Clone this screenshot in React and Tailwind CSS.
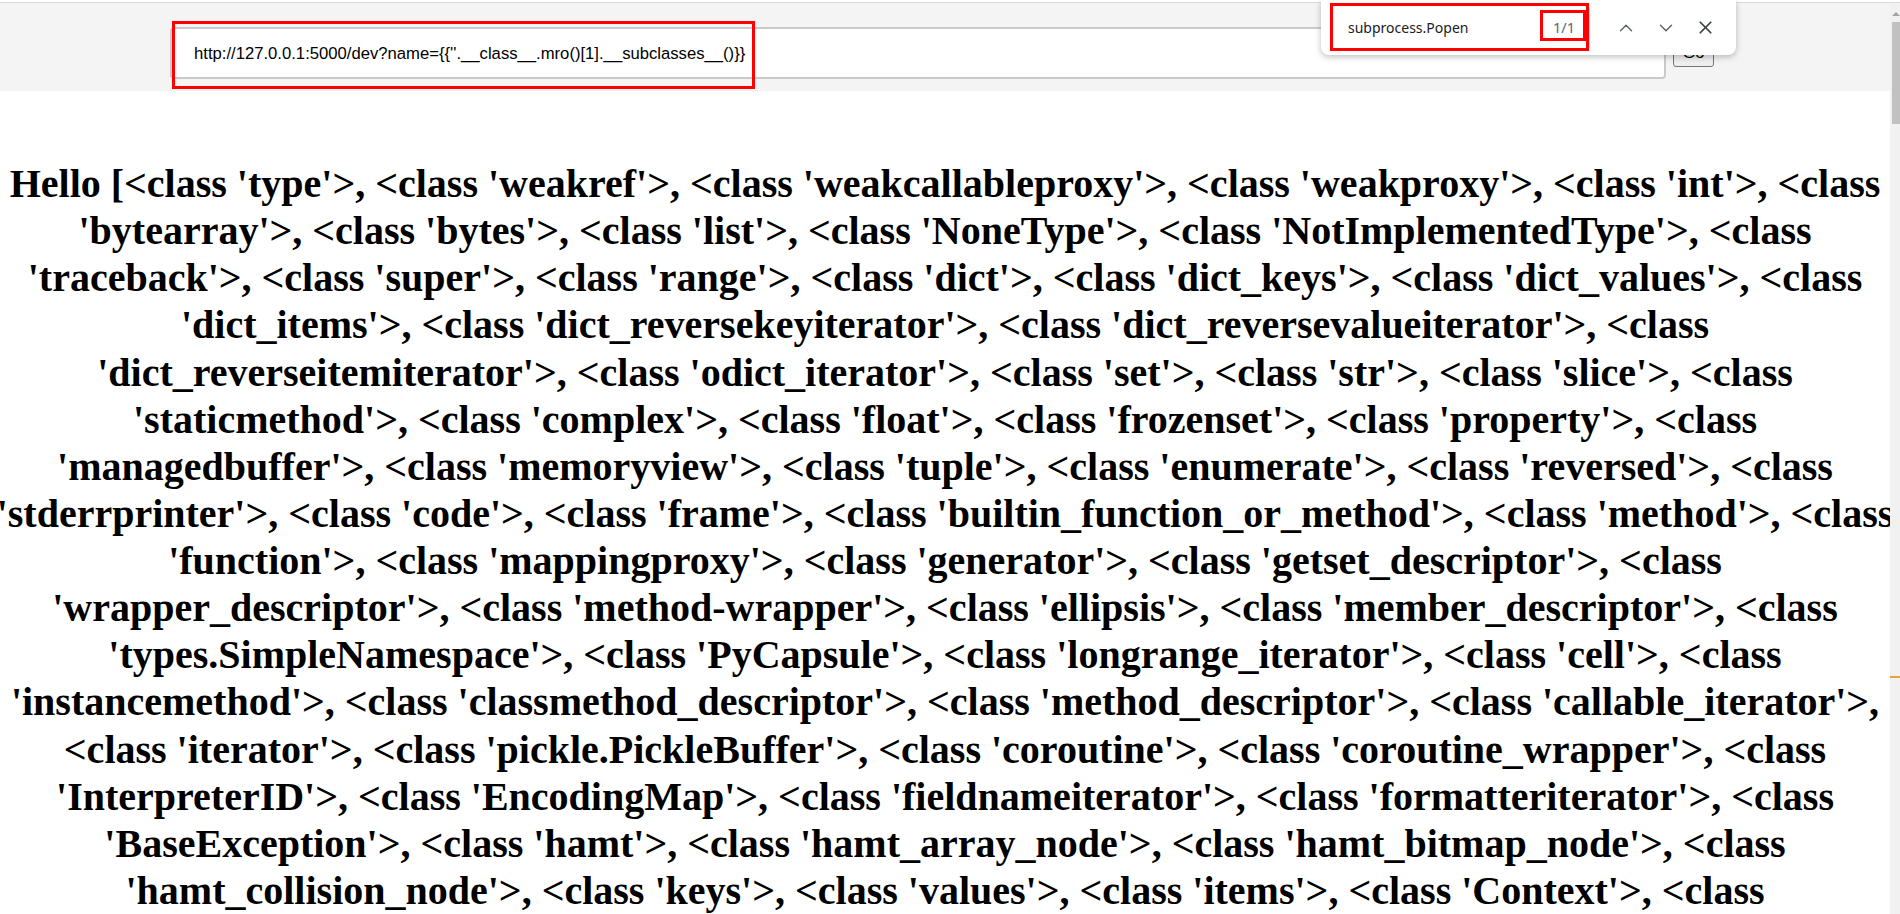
import { ChevronUp, ChevronDown, X } from 'lucide-react';

const LINES = [
    "Hello [<class 'type'>, <class 'weakref'>, <class 'weakcallableproxy'>, <class 'weakproxy'>, <class 'int'>, <class",
    "'bytearray'>, <class 'bytes'>, <class 'list'>, <class 'NoneType'>, <class 'NotImplementedType'>, <class",
    "'traceback'>, <class 'super'>, <class 'range'>, <class 'dict'>, <class 'dict_keys'>, <class 'dict_values'>, <class",
    "'dict_items'>, <class 'dict_reversekeyiterator'>, <class 'dict_reversevalueiterator'>, <class",
    "'dict_reverseitemiterator'>, <class 'odict_iterator'>, <class 'set'>, <class 'str'>, <class 'slice'>, <class",
    "'staticmethod'>, <class 'complex'>, <class 'float'>, <class 'frozenset'>, <class 'property'>, <class",
    "'managedbuffer'>, <class 'memoryview'>, <class 'tuple'>, <class 'enumerate'>, <class 'reversed'>, <class",
    "'stderrprinter'>, <class 'code'>, <class 'frame'>, <class 'builtin_function_or_method'>, <class 'method'>, <class",
    "'function'>, <class 'mappingproxy'>, <class 'generator'>, <class 'getset_descriptor'>, <class",
    "'wrapper_descriptor'>, <class 'method-wrapper'>, <class 'ellipsis'>, <class 'member_descriptor'>, <class",
    "'types.SimpleNamespace'>, <class 'PyCapsule'>, <class 'longrange_iterator'>, <class 'cell'>, <class",
    "'instancemethod'>, <class 'classmethod_descriptor'>, <class 'method_descriptor'>, <class 'callable_iterator'>,",
    "<class 'iterator'>, <class 'pickle.PickleBuffer'>, <class 'coroutine'>, <class 'coroutine_wrapper'>, <class",
    "'InterpreterID'>, <class 'EncodingMap'>, <class 'fieldnameiterator'>, <class 'formatteriterator'>, <class",
    "'BaseException'>, <class 'hamt'>, <class 'hamt_array_node'>, <class 'hamt_bitmap_node'>, <class",
    "'hamt_collision_node'>, <class 'keys'>, <class 'values'>, <class 'items'>, <class 'Context'>, <class",
];

export default function App() {
    return (
        <div className="relative w-[1900px] h-[914px] overflow-hidden bg-white flex flex-col">
            {/* browser chrome edge */}
            <div className="h-[3px] shrink-0 border-b border-[#dadada] bg-white" />

            <div className="flex flex-1 min-h-0">
                {/* page */}
                <div className="flex-1 min-w-0 flex flex-col">
                    <div className="h-[88px] shrink-0 bg-[#f4f4f4] flex items-start pt-[24px] pl-[170px]">
                        <div className="w-[1496px] h-[52px] bg-white border-2 border-[#cacaca] rounded-[4px] flex items-center pl-[22px] font-['Liberation_Sans',Arial,sans-serif] text-[16.67px] text-black">
                            {"http://127.0.0.1:5000/dev?name={{''.__class__.mro()[1].__subclasses__()}}"}
                        </div>
                        <button className="ml-[7px] mt-[13px] w-[41px] h-[27px] bg-[#efefef] border border-[#767676] rounded-[3px] font-['Liberation_Sans',Arial,sans-serif] text-[16.67px] text-black leading-none">
                            Go
                        </button>
                    </div>

                    <div className="pt-[69px] font-['Liberation_Serif','Times_New_Roman',serif] font-bold text-[40px] text-black">
                        {LINES.map((line, i) => (
                            <div key={i} className="flex justify-center whitespace-nowrap h-[47.13px] leading-[47.13px]">
                                {line}
                            </div>
                        ))}
                    </div>
                </div>

                {/* scrollbar */}
                <div className="relative w-[10px] shrink-0 bg-[#f1f1f1] flex flex-col items-end">
                    <div className="mt-[9px] w-0 h-0 border-l-[4px] border-r-[4px] border-b-[4px] border-l-transparent border-r-transparent border-b-[#a3a3a3]" />
                    <div className="mt-[6px] w-[8px] h-[102px] bg-[#c1c1c1]" />
                    <div className="absolute left-0 top-[673px] w-[10px] h-[2px] bg-[#e6a23c]" />
                </div>
            </div>

            {/* find-in-page bar */}
            <div className="absolute left-[1321px] top-0 w-[415px] h-[55px] bg-white rounded-b-[8px] shadow-[0_2px_6px_rgba(0,0,0,0.25)] flex items-center font-['Noto_Sans',sans-serif]">
                <div className="w-[268px] pl-[27px] pr-[12px] flex items-center justify-between">
                    <span className="text-[14px] text-[#202124]">subprocess.Popen</span>
                    <span className="text-[14.5px] text-[#5f6368] mr-[2px]">1/1</span>
                </div>
                <div className="w-px h-[40px] bg-[#dadce0]" />
                <div className="flex items-center ml-[25px] gap-[18px] text-[#5f6368]">
                    <ChevronUp size={22} strokeWidth={1.6} />
                    <ChevronDown size={22} strokeWidth={1.6} />
                    <X size={21} strokeWidth={2} className="text-[#3c4043]" />
                </div>
            </div>

            {/* annotation boxes */}
            <div className="absolute left-[172px] top-[21px] w-[583px] h-[68px] border-[3px] border-[#ff0000]" />
            <div className="absolute left-[1330px] top-[3px] w-[259px] h-[48px] border-[3px] border-[#ff0000]" />
            <div className="absolute left-[1540px] top-[10px] w-[46px] h-[31px] border-[3px] border-[#ff0000]" />
        </div>
    );
}
